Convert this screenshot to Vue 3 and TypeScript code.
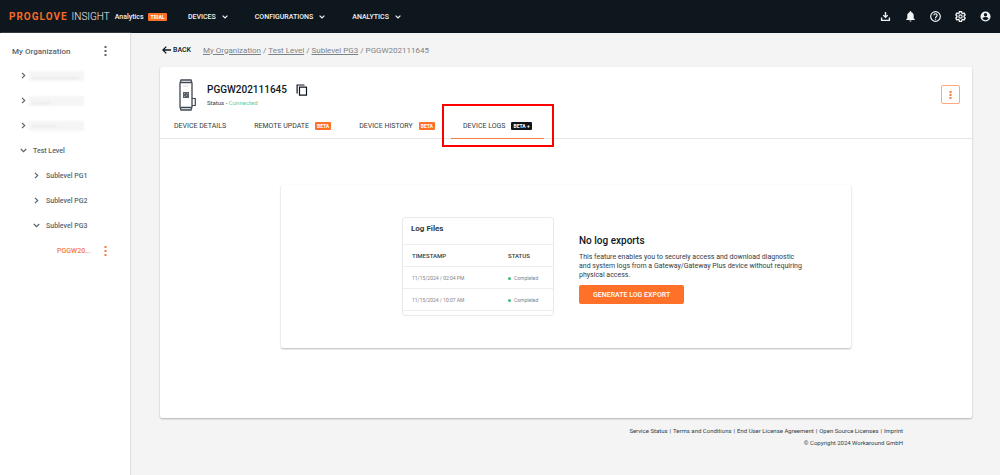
<script setup lang="ts">
interface NavItem { label: string }
interface TreeItem { label: string; level: number; open?: boolean; hidden?: boolean; trace?: string; leaf?: boolean }
interface Tab { label: string; badge?: string; active?: boolean }
interface LogRow { time: string; status: string }

const nav: NavItem[] = [{ label: 'DEVICES' }, { label: 'CONFIGURATIONS' }, { label: 'ANALYTICS' }]
const tree: TreeItem[] = [
  { label: 'Hidden level 1', level: 0, hidden: true, trace: 'M4 7H50' },
  { label: 'Hidden level 2', level: 0, hidden: true, trace: 'M4 7H22' },
  { label: 'Hidden level 3', level: 0, hidden: true, trace: 'M4 5H28' },
  { label: 'Test Level', level: 0, open: true },
  { label: 'Sublevel PG1', level: 1 },
  { label: 'Sublevel PG2', level: 1 },
  { label: 'Sublevel PG3', level: 1, open: true },
  { label: 'PGGW20...', level: 2, leaf: true },
]
const crumbs: string[] = ['My Organization', 'Test Level', 'Sublevel PG3']
const tabs: Tab[] = [
  { label: 'DEVICE DETAILS' },
  { label: 'REMOTE UPDATE', badge: 'BETA' },
  { label: 'DEVICE HISTORY', badge: 'BETA' },
  { label: 'DEVICE LOGS', badge: 'BETA +', active: true },
]
const logs: LogRow[] = [
  { time: '11/15/2024 / 02:04 PM', status: 'Completed' },
  { time: '11/15/2024 / 10:07 AM', status: 'Completed' },
]
const legal: string[] = ['Service Status', 'Terms and Conditions', 'End User License Agreement', 'Open Source Licenses', 'Imprint']
</script>

<template>
  <div class="page">
    <header class="topbar">
      <a class="brand" href="#">
        <span class="brand-name">PROGLOVE</span>
        <span class="brand-product">INSIGHT</span>
        <span class="brand-module">Analytics</span>
        <span class="badge trial">TRIAL</span>
      </a>
      <nav class="nav">
        <button v-for="n in nav" :key="n.label" type="button">
          {{ n.label }}
          <svg width="6" height="4" viewBox="0 0 6 4"><path d="M.6.6 3 3 5.4.6" fill="none" stroke="currentColor" stroke-width="1.2" /></svg>
        </button>
      </nav>
      <div class="tools">
        <button type="button" aria-label="Downloads">
          <svg viewBox="0 0 24 24"><path d="M10.500 2h3v8.500L16 8l2 2-6 6-6-6 2-2 2.500 2.500zM2 14h3v5h14v-5h3v8H2z" /></svg>
        </button>
        <button type="button" aria-label="Notifications">
          <svg viewBox="0 0 24 24"><path d="M12 23c1.200 0 2.300-1 2.300-2.200H9.700C9.700 22 10.800 23 12 23zm7-7v-6c0-3.500-1.900-6.300-5.200-7.100V2a1.800 1.800 0 0 0-3.600 0v.9C6.900 3.700 5 6.500 5 10v6l-2.500 2.500v1.200h19v-1.200z" /></svg>
        </button>
        <button type="button" aria-label="Help">
          <svg viewBox="0 0 24 24"><circle cx="12" cy="12" r="10.500" fill="none" stroke="currentColor" stroke-width="2.600" /><path d="M8.500 9.500a3.500 3.500 0 1 1 5.300 3c-1.300.9-1.800 1.300-1.800 2.500" fill="none" stroke="currentColor" stroke-width="2.600" /><path d="M10.700 16.500h2.600v2.500h-2.600z" /></svg>
        </button>
        <button type="button" aria-label="Settings">
          <svg viewBox="0 0 24 24"><path d="M9.700 1.500h4.600l.7 3.200 1.800 1 3-1 2.300 4-2.300 2.200v2.200l2.300 2.200-2.300 4-3-1-1.800 1-.7 3.200H9.700L9 19.300l-1.800-1-3 1-2.300-4 2.300-2.200v-2.200L1.900 8.700l2.300-4 3 1 1.800-1z" fill="none" stroke="currentColor" stroke-width="3" /><circle cx="12" cy="12" r="3.600" fill="none" stroke="currentColor" stroke-width="2.600" /></svg>
        </button>
        <button type="button" aria-label="Account">
          <svg viewBox="0 0 24 24"><path fill-rule="evenodd" d="M12 1a11 11 0 1 0 0 22 11 11 0 0 0 0-22zm0 3.500a3.700 3.700 0 1 1 0 7.400 3.700 3.700 0 0 1 0-7.400zM12 20a8 8 0 0 1-6.600-3.400c0-2.200 4.400-3.300 6.600-3.300s6.600 1.100 6.600 3.300A8 8 0 0 1 12 20z" /></svg>
        </button>
      </div>
    </header>

    <div class="body">
      <aside class="sidebar">
        <div class="org">
          <span>My Organization</span>
          <button class="dots" type="button" aria-label="Organization options">
            <svg width="3" height="10" viewBox="0 0 3 10"><path d="M.5 0h2v2h-2zM.5 4h2v2h-2zM.5 8h2v2h-2z" /></svg>
          </button>
        </div>
        <ul class="tree">
          <li v-for="t in tree" :key="t.label" :class="['level-' + t.level, { leaf: t.leaf }]">
            <button v-if="!t.leaf" class="toggle" type="button" :aria-label="'Toggle ' + t.label">
              <svg v-if="t.open" width="7" height="7" viewBox="0 0 7 7"><path d="M.8 2 3.500 4.700 6.200 2" /></svg>
              <svg v-else width="7" height="7" viewBox="0 0 7 7"><path d="M2 .8 4.700 3.500 2 6.200" /></svg>
            </button>
            <span v-if="t.hidden" class="redacted">
              <svg width="55" height="10" viewBox="0 0 55 10"><path :d="t.trace" /></svg>
            </span>
            <a v-else href="#">{{ t.label }}</a>
            <button v-if="t.leaf" class="dots" type="button" aria-label="Device options">
              <svg width="3" height="10" viewBox="0 0 3 10"><path d="M.5 0h2v2h-2zM.5 4h2v2h-2zM.5 8h2v2h-2z" /></svg>
            </button>
          </li>
        </ul>
      </aside>

      <main class="main">
        <div class="crumbbar">
          <button class="back" type="button">
            <svg width="9" height="8" viewBox="0 0 9 8"><path d="M4.300.6.900 4l3.400 3.400M1 4h8" fill="none" stroke="currentColor" stroke-width="1.300" /></svg>
            BACK
          </button>
          <nav class="crumbs">
            <template v-for="c in crumbs" :key="c"><a href="#">{{ c }}</a><i>/</i></template><span>PGGW202111645</span>
          </nav>
        </div>

        <section class="card">
          <div class="device">
            <svg class="device-icon" width="18" height="32" viewBox="0 0 18 32" fill="none" stroke="#3f4851">
              <path d="M2 1h10l1 3v24l-1 3H2l-1-3V4z" fill="#fff" stroke-width="1.300" />
              <path d="M1.500 3.500h11M1.500 28.500h11" stroke-width="1.500" />
              <path d="M13 19.500h3.300v7H13" stroke-width="1.200" />
              <path d="M4.500 7h5" stroke="#b4b8bb" stroke-dasharray="1 .6" />
              <path d="M4 13h6v6H4z" fill="#59616a" stroke="none" />
              <path d="M5 14h1v1H5zM8 14h1v1H8zM5 17h1v1H5zM7 16h1v1H7z" fill="#9da3a8" stroke="none" />
            </svg>
            <div class="device-text">
              <h1>
                PGGW202111645
                <button type="button" aria-label="Copy serial number">
                  <svg width="12" height="12" viewBox="0 0 12 12" fill="none" stroke="currentColor" stroke-width="1.200"><path d="M1.100 9.500V1h7.400M3.500 3.100h7v8h-7z" /></svg>
                </button>
              </h1>
              <p>Status - <em>Connected</em></p>
            </div>
            <button class="more" type="button" aria-label="More actions">
              <svg width="3" height="8" viewBox="0 0 3 8"><path d="M.5 0h2v2h-2zM.5 3h2v2h-2zM.5 6h2v2h-2z" /></svg>
            </button>
          </div>

          <nav class="tabs">
            <button v-for="t in tabs" :key="t.label" type="button" :class="{ active: t.active }">
              {{ t.label }}
              <span v-if="t.badge" class="badge" :class="{ dark: t.active }">{{ t.badge }}</span>
              <span v-if="t.active" class="highlight"></span>
            </button>
          </nav>

          <div class="empty">
            <div class="preview">
              <h2>Log Files</h2>
              <table>
                <thead><tr><th>TIMESTAMP</th><th>STATUS</th></tr></thead>
                <tbody>
                  <tr v-for="l in logs" :key="l.time"><td>{{ l.time }}</td><td><span class="dot"></span>{{ l.status }}</td></tr>
                </tbody>
              </table>
            </div>
            <div class="message">
              <h2>No log exports</h2>
              <p>This feature enables you to securely access and download diagnostic and system logs from a Gateway/Gateway Plus device without requiring physical access.</p>
              <button type="button">GENERATE LOG EXPORT</button>
            </div>
          </div>
        </section>

        <footer class="footer">
          <p class="legal"><template v-for="(l, i) in legal" :key="l"><span v-if="i">|</span><a href="#">{{ l }}</a></template></p>
          <p>© Copyright 2024 Workaround GmbH</p>
        </footer>
      </main>
    </div>
  </div>
</template>

<style>
body { margin: 0; background: #f4f4f4; }
</style>

<style scoped>
.page { min-height: 100vh; display: flex; flex-direction: column; font-family: Roboto, "Liberation Sans", sans-serif; font-size: 7px; color: #333c44; }
.page *, .page { box-sizing: border-box; }
button { font: inherit; color: inherit; background: none; border: 0; padding: 0; margin: 0; display: inline-flex; align-items: center; cursor: pointer; white-space: nowrap; }
a { color: inherit; text-decoration: none; }
h1, h2, p, ul { margin: 0; padding: 0; }
svg { display: block; flex: none; }
svg:not([fill]) { fill: currentColor; }

.topbar { height: 33px; background: #0e171e; color: #f2f3f3; display: flex; align-items: center; padding: 0 9px; }
.brand { display: flex; align-items: center; width: 179px; }
.brand-name { font-size: 10px; font-weight: 700; letter-spacing: 1px; color: #f56a26; }
.brand-product { font-size: 10px; margin-left: 4px; font-weight: 300; }
.brand-module { font-size: 7px; font-weight: 500; margin-left: 5px; }
.badge { background: #ff7029; color: #fff; font-size: 5px; font-weight: 700; line-height: 8px; padding: 0 2px; border-radius: 1px; }
.badge.dark { background: #0e171e; }
.trial { margin-left: 4px; padding: 0 3px; }
.nav { display: flex; gap: 27px; font-weight: 500; }
.nav button { gap: 6px; }
.tools { margin-left: auto; display: flex; gap: 13px; }
.tools button { width: 12px; height: 12px; justify-content: center; }
.tools svg { width: 11px; height: 11px; }

.body { flex: 1; display: flex; }
.sidebar { flex: 0 0 130px; background: #fff; box-shadow: 1px 0 1px #dedede; color: #5c646c; }
.org { display: flex; align-items: center; justify-content: space-between; height: 30px; padding: 6px 23px 0 12px; font-size: 8px; font-weight: 500; }
.dots { width: 4px; justify-content: center; }
.tree { list-style: none; font-weight: 500; }
.tree li { display: flex; align-items: center; height: 25px; padding-left: 20px; }
.tree li.level-1 { padding-left: 33px; }
.tree li.level-2 { padding: 0 23px 0 57px; justify-content: space-between; color: #f47b3e; }
.toggle { width: 7px; margin-right: 6px; }
.toggle svg { fill: none; stroke: #5c646c; stroke-width: 1.200; }
.redacted { width: 55px; margin-left: -4px; background: #f5f5f5; filter: blur(1px); }
.redacted svg { fill: none; stroke: #d4d6d8; stroke-width: 1; stroke-dasharray: 2 1; }

.main { flex: 1; min-width: 0; padding: 0 28px 24px 30px; }
.crumbbar { display: flex; align-items: center; height: 34px; padding-left: 2px; }
.back { gap: 2px; font-weight: 500; color: #0e171e; }
.crumbs { margin-left: 12px; font-size: 8px; color: #7c8388; display: flex; }
.crumbs a { text-decoration: underline; }
.crumbs i { font-style: normal; margin: 0 2px; }

.card { background: #fff; border-radius: 2px; box-shadow: 0 1px 2px rgba(0, 0, 0, .28); min-height: 351px; }
.device { display: flex; padding: 12px 12px 0 19px; }
.device-icon { margin-right: 10px; }
.device-text { flex: 1; padding-top: 4px; }
h1 { font-size: 10px; line-height: 13px; font-weight: 500; color: #0e171e; display: flex; align-items: center; gap: 9px; }
.device-text p { font-size: 6px; line-height: 8px; margin-top: 3px; }
.device-text em { font-style: normal; color: #5fcb94; }
.more { width: 19px; height: 19px; margin-top: 6px; border: 1px solid #ffa87c; border-radius: 2px; justify-content: center; color: #f47b3e; }

.tabs { display: flex; gap: 4px; padding-left: 3px; margin-top: 2px; border-bottom: 1px solid #e4e5e6; }
.tabs button { position: relative; height: 26px; padding: 0 12px; gap: 6px; border-bottom: 1px solid transparent; margin-bottom: -1px; }
.tabs button:first-child { padding-left: 11px; }
.tabs button.active { border-color: #f47b3e; }
.highlight { position: absolute; inset: -9px -10px -9px -9px; border: 2px solid #f00; }

.empty { max-width: 570px; min-height: 163px; margin: 46px auto 0; padding: 32px 38px 30px 121px; display: flex; gap: 25px; border-radius: 2px; box-shadow: 0 1px 2px rgba(0, 0, 0, .28); }
.preview { flex: 0 0 152px; height: 99px; border: 1px solid #e8e9ea; border-radius: 3px; }
.preview h2 { font-size: 8px; line-height: 10px; padding: 6px 8px 10px; font-weight: 700; }
table { width: 100%; border-collapse: collapse; font-size: 5px; }
th, td { height: 22px; padding: 0 0 0 9px; text-align: left; border-top: 1px solid #eceded; }
tbody tr:last-child td { border-bottom: 1px solid #eceded; }
th { font-size: 6px; font-weight: 500; }
th:first-child { width: 96px; }
td { color: #7c8388; }
.dot { display: inline-block; width: 3px; height: 3px; border-radius: 50%; background: #35bf7e; margin-right: 3px; vertical-align: middle; }
.message { flex: 1; padding-top: 18px; }
.message h2 { font-size: 10px; line-height: 12px; font-weight: 500; color: #0e171e; }
.message p { max-width: 226px; line-height: 9px; margin-top: 6px; }
.message button { height: 19px; margin-top: 5px; padding: 0 14px; border-radius: 2px; background: #ff7029; color: #fff; font-weight: 500; }

.footer { padding: 7px 69px 0 0; text-align: right; font-size: 6px; line-height: 12px; }
.legal { display: flex; justify-content: flex-end; gap: 2px; }
</style>
